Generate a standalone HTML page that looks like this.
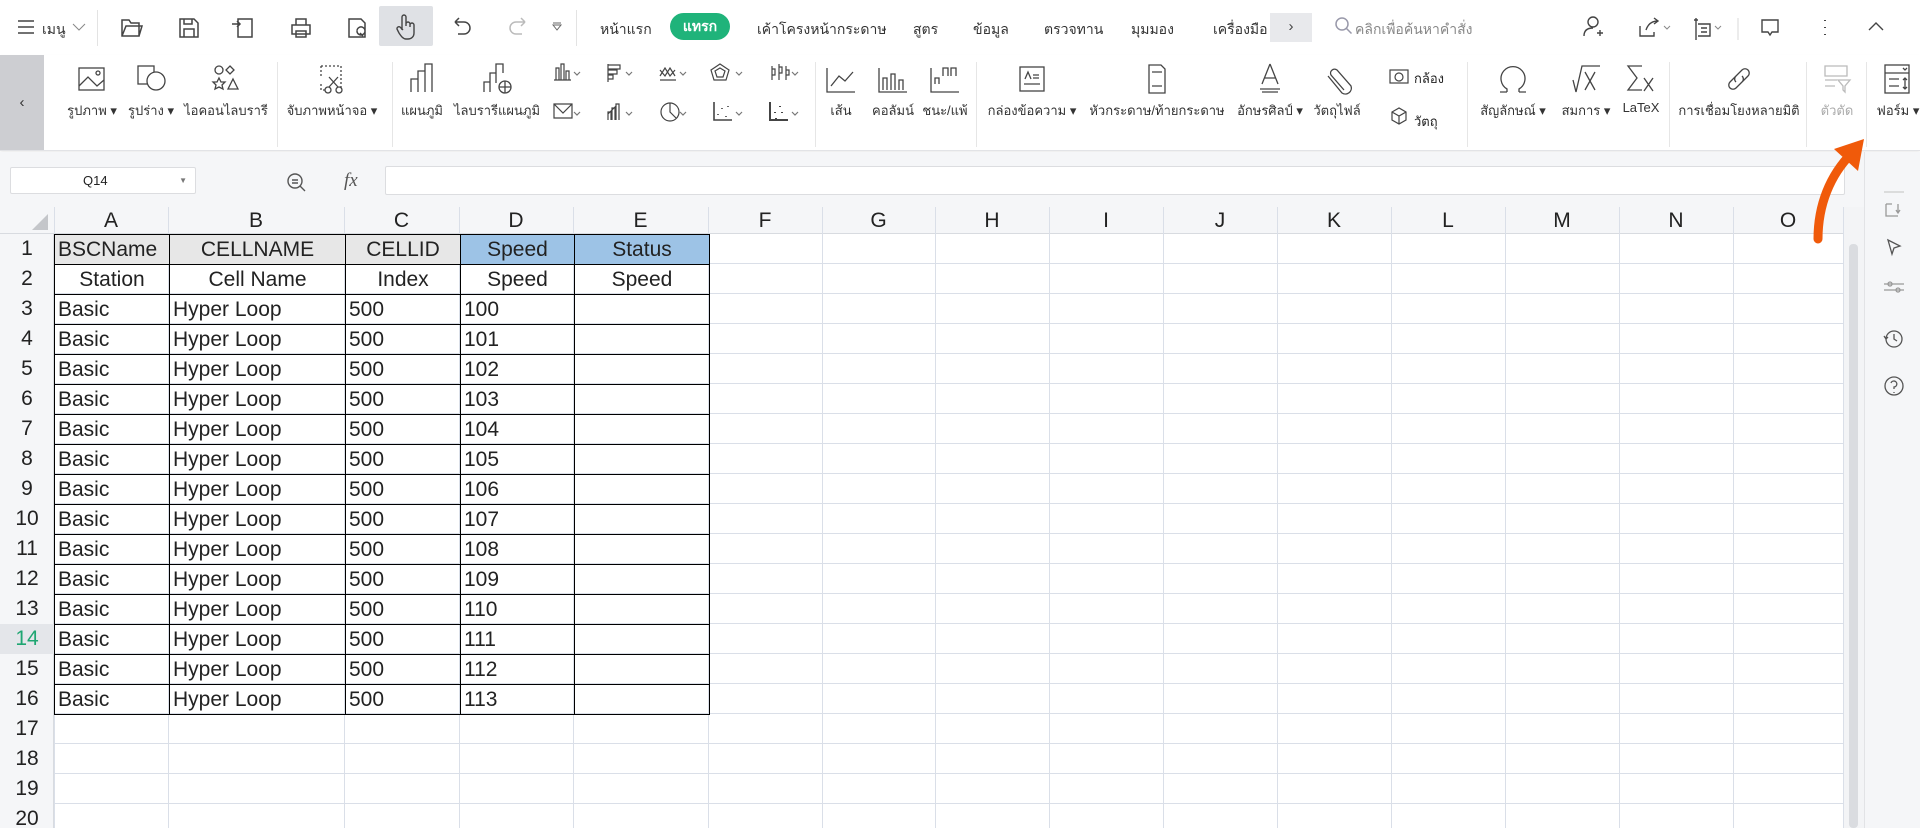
<!DOCTYPE html>
<html><head><meta charset="utf-8"><style>
*{box-sizing:border-box;margin:0;padding:0}
body{width:1920px;height:828px;overflow:hidden;background:#fff;font-family:"Liberation Sans","DejaVu Sans",sans-serif;position:relative;color:#222}
.a{position:absolute}
.tb{font-size:14px;color:#333;top:19px}
.ic{position:absolute}
.ri{position:absolute;top:62px;width:34px;height:36px;fill:none;stroke:#444;stroke-width:1.3}
.rl{position:absolute;top:100px;font-size:13px;color:#333;white-space:nowrap;transform:translateX(-50%)}
.sep{position:absolute;top:62px;width:1px;height:85px;background:#e6e6e6}
.grid{position:absolute;left:54px;top:234px;width:1789px;height:594px;background:repeating-linear-gradient(to bottom,transparent 0,transparent 29px,#dadfe8 29px,#dadfe8 30px)}
.vl{position:absolute;top:207px;width:1px;height:621px;background:#dadfe8}
.ch{position:absolute;top:207px;height:27px;font-size:21px;text-align:center;line-height:27px;color:#222}
.rh{position:absolute;left:0;width:54px;height:30px;font-size:21px;line-height:30px;text-align:center}
table{position:absolute;left:54px;top:234px;border-collapse:collapse;font-size:21px}
td{border:1px solid #000;height:30px;padding:0 3px;line-height:28px;white-space:nowrap}
tr.c td{text-align:center}
</style></head><body>
<!-- top bar -->
<svg class="ic" style="left:16px;top:18px" width="22" height="18"><path d="M2 3h16M2 9h16M2 15h16" stroke="#444" stroke-width="1.5"/></svg>
<div class="a tb" style="left:42px">เมนู</div>
<svg class="ic" style="left:72px;top:22px" width="14" height="10"><path d="M1 2l6 6 6-6" stroke="#888" fill="none"/></svg>
<div class="a" style="left:97px;top:10px;width:1px;height:36px;background:#e3e3e3"></div>
<svg class="ic" style="left:120px;top:16px" width="360" height="24" fill="none" stroke="#444" stroke-width="1.5">
<path d="M2 4h7l2 3h8v13H2z M2 20l4-10h16l-3 10"/>
<path d="M60 3h14l4 4v14H60z M64 21v-8h10v8 M64 3v5h8V3"/>
<path d="M118 3h14v18h-14z M112 8h8 M117 5l3 3-3 3"/>
<path d="M172 9h18v9h-18z M176 9V3h10v6 M176 15h10v6h-10z"/>
<path d="M229 3h12l4 4v14h-16z M237 15a4 4 0 1 0 0-.1 M240 17l3 3"/>
</svg>
<div class="a" style="left:379px;top:6px;width:54px;height:40px;background:#dfe1e5;border-radius:2px"></div>
<svg class="ic" style="left:392px;top:12px" width="30" height="30" fill="none" stroke="#444" stroke-width="1.4"><path d="M10 18V5a2 2 0 0 1 4 0v9 M14 12a2 2 0 0 1 4 0v3 M18 13a2 2 0 0 1 4 0v8c0 4-3 6-6 6h-2c-3 0-5-3-7-6l-2-4a2 2 0 0 1 3-2l3 3"/></svg>
<svg class="ic" style="left:450px;top:16px" width="120" height="24" fill="none" stroke-width="1.5"><path d="M5 6h9a6 6 0 0 1 0 12h-6 M5 6l4-4 M5 6l4 4" stroke="#444"/><path d="M75 6h-9a6 6 0 0 0 0 12h6 M75 6l-4-4 M75 6l-4 4" stroke="#bbb"/><path d="M103 9l4 5 4-5z M103 7h8" stroke="#666" stroke-width="1"/></svg>
<div class="a" style="left:576px;top:10px;width:1px;height:36px;background:#e3e3e3"></div>
<div class="a tb" style="left:600px">หน้าแรก</div>
<div class="a" style="left:670px;top:13px;width:60px;height:27px;background:#1fb37a;border-radius:14px;color:#fff;font-size:14px;font-weight:bold;text-align:center;line-height:27px">แทรก</div>
<div class="a tb" style="left:757px">เค้าโครงหน้ากระดาษ</div>
<div class="a tb" style="left:913px">สูตร</div>
<div class="a tb" style="left:973px">ข้อมูล</div>
<div class="a tb" style="left:1044px">ตรวจทาน</div>
<div class="a tb" style="left:1131px">มุมมอง</div>
<div class="a tb" style="left:1213px">เครื่องมือ</div>
<div class="a" style="left:1270px;top:13px;width:42px;height:29px;background:#e8e9ec;text-align:center;line-height:28px;font-size:15px;color:#444">›</div>
<svg class="ic" style="left:1334px;top:16px" width="20" height="20" fill="none" stroke="#99a" stroke-width="1.5"><circle cx="8" cy="8" r="6"/><path d="M12.5 12.5l5 5"/></svg>
<div class="a tb" style="left:1355px;color:#888">คลิกเพื่อค้นหาคำสั่ง</div>
<svg class="ic" style="left:1580px;top:14px" width="320" height="26" fill="none" stroke="#444" stroke-width="1.4">
<circle cx="13" cy="8" r="5"/><path d="M4 22c0-6 4-8 9-8 M17 19h6 M20 16v6"/>
<path d="M60 12v10h14v-4 M66 16c2-6 6-9 12-9 M74 4l4 3-4 3"/><path d="M84 12l3 3 3-3" stroke="#888" stroke-width="1"/>
<path d="M114 6h4 M116 4v22 M118 10h12v12h-12 M121 14h6 M121 18h6"/><path d="M135 12l3 3 3-3" stroke="#888" stroke-width="1"/>
<path d="M158 4v28" stroke="#e3e3e3"/>
<path d="M182 6h16v12h-6l-2 3-2-3h-6z"/>
<path d="M245 6v1 M245 13v1 M245 20v1" stroke-width="2"/>
<path d="M289 16l7-7 7 7"/>
</svg>
<!-- ribbon -->
<div class="a" style="left:0;top:55px;width:1920px;height:96px;border-bottom:1px solid #e2e3e6;box-shadow:0 2px 3px #eee"></div>
<div class="a" style="left:0;top:55px;width:44px;height:95px;background:#cdced2;text-align:center;line-height:95px;font-size:15px;color:#333">‹</div>
<svg class="ri" style="left:75px"><rect x="4" y="6" width="25" height="22"/><path d="M4 24l9-9 9 9 7-6"/><circle cx="23" cy="11" r="2"/></svg>
<svg class="ri" style="left:134px"><rect x="4" y="4" width="16" height="18"/><circle cx="22" cy="19" r="9" fill="#fff"/></svg>
<svg class="ri" style="left:209px"><circle cx="10" cy="8" r="4"/><path d="M21 4l4 4-4 4-4-4z M10 16l2 4h4l-3 3 1 4-4-2-4 2 1-4-3-3h4z M24 17l5 10h-10z"/></svg>
<svg class="ri" style="left:315px"><path d="M6 4h20v24 M6 4v10 M6 22v6h6" stroke-dasharray="2 2"/><circle cx="13" cy="28" r="3"/><circle cx="24" cy="28" r="3"/><path d="M14 25l9-10 M23 25l-9-10"/></svg>
<svg class="ri" style="left:405px"><path d="M6 30V17h7v13 M13 30V9h7v21 M20 30V2h7v28"/></svg>
<svg class="ri" style="left:480px"><path d="M4 30V20h6v10 M10 30V11h6v10 M16 15V2h7v9"/><circle cx="25" cy="25" r="6"/><path d="M19 25h12 M25 19v12"/></svg>
<svg class="ic" style="left:550px;top:62px" width="260" height="70" fill="none" stroke="#444" stroke-width="1.2">
<path d="M6 18V6h3v12 M11 18V2h3v16 M16 18V9h3v9 M4 18h17"/><path d="M24 10l3 3 3-3" stroke="#777"/>
<path d="M58 3h12v4H58 M58 8h9v4h-9 M58 13h5v4h-5 M58 2v18"/><path d="M76 10l3 3 3-3" stroke="#777"/>
<path d="M110 8l5 6 5-8 5 8 M110 14l5-8 5 8 5-6 M110 18h16"/><path d="M130 10l3 3 3-3" stroke="#777"/>
<path d="M170 2l9 6-3 10h-12l-3-10z M170 6l5 3-2 6h-6l-2-6z"/><path d="M186 10l3 3 3-3" stroke="#777"/>
<path d="M222 4v14 M222 7h3v6h-3 M229 2v16 M229 5h3v6h-3 M236 4v14 M236 8h3v5h-3"/><path d="M242 10l3 3 3-3" stroke="#777"/>
<path d="M4 42h18v14H4z M4 42l9 9 9-9"/><path d="M24 50l3 3 3-3" stroke="#777"/>
<path d="M58 58V50h3v8 M62 58V46h3v12 M66 58V42h3v16 M58 52l8-8"/><path d="M76 50l3 3 3-3" stroke="#777"/>
<circle cx="120" cy="50" r="9"/><path d="M120 41v9l6 6"/><path d="M130 50l3 3 3-3" stroke="#777"/>
<path d="M164 40v18h18 M168 52v1 M172 46v1 M176 54v1 M178 44v1" stroke-width="1.6"/><path d="M186 50l3 3 3-3" stroke="#777"/>
<path d="M220 40v18h18 M225 50v1 M230 44v1 M232 50v1 M226 56v1" stroke-width="2"/><path d="M242 50l3 3 3-3" stroke="#777"/>
</svg>
<svg class="ri" style="left:824px"><path d="M3 6v24h28 M7 24l8-10 6 5 8-9"/></svg>
<svg class="ri" style="left:876px"><path d="M3 6v24h28 M7 28v-12h4v12 M15 28v-16h4v16 M23 28v-10h4v10"/></svg>
<svg class="ri" style="left:928px"><path d="M3 6v24h28 M7 22v-6h4v6 M15 14v-8h5v8 M23 14v-8h5v8"/></svg>
<svg class="ri" style="left:1015px"><rect x="5" y="5" width="24" height="24"/><path d="M9 22h16 M10 17l3-7 3 7 M18 13h6 M18 16h6"/></svg>
<svg class="ri" style="left:1140px"><path d="M9 3h12l4 4v24h-16z M12 10h10 M12 24h10"/></svg>
<svg class="ri" style="left:1253px"><path d="M17 2l-8 20 M17 2l8 20 M11 16h12 M7 27h20 M9 30h16"/></svg>
<svg class="ri" style="left:1320px"><path d="M24 28l-13-15a4 4 0 0 1 6-5l14 16a6 6 0 0 1-9 7l-14-17"/></svg>
<svg class="ic" style="left:1388px;top:66px" width="40" height="60" fill="none" stroke="#444" stroke-width="1.2"><rect x="2" y="4" width="18" height="13"/><circle cx="11" cy="11" r="4"/><path d="M4 46l7-4 7 4v8l-7 4-7-4z M11 50v8 M4 46l7 4 7-4"/></svg>
<div class="a" style="left:1414px;top:68px;font-size:13px">กล้อง</div>
<div class="a" style="left:1414px;top:111px;font-size:13px">วัตถุ</div>
<svg class="ri" style="left:1496px"><path d="M11 30h-7 M23 30h7 M11 30v-3a12 12 0 1 1 12 0v3"/></svg>
<svg class="ri" style="left:1569px"><path d="M4 18l3 12 6-26h18 M16 10l10 18 M26 10l-10 18"/></svg>
<svg class="ri" style="left:1624px"><path d="M18 4H4l9 12-9 12h14 M20 16l9 13 M29 16l-9 13"/></svg>
<svg class="ri" style="left:1722px"><path d="M14 14l-6 6a4 4 0 0 0 6 6l6-6a4 4 0 0 0 0-6 M20 20l6-6a4 4 0 0 0-6-6l-6 6a4 4 0 0 0 0 6"/></svg>
<svg class="ri" style="left:1820px;stroke:#bbb"><path d="M5 4h22v10H5z M5 18h12 M5 24h10 M18 18h12l-5 6v6l-2-2v-4z"/></svg>
<svg class="ri" style="left:1881px"><rect x="4" y="3" width="24" height="28"/><path d="M4 11h24 M8 17h10 M8 24h10 M24 16v11 M22 18l2-2 2 2 M22 25l2 2 2-2 M22 6l2 2 2-2"/></svg>
<div class="rl" style="left:92px">รูปภาพ ▾</div>
<div class="rl" style="left:151px">รูปร่าง ▾</div>
<div class="rl" style="left:226px">ไอคอนไลบรารี</div>
<div class="sep" style="left:277px"></div>
<div class="rl" style="left:332px">จับภาพหน้าจอ ▾</div>
<div class="sep" style="left:392px"></div>
<div class="rl" style="left:422px">แผนภูมิ</div>
<div class="rl" style="left:497px">ไลบรารีแผนภูมิ</div>
<div class="sep" style="left:815px"></div>
<div class="rl" style="left:841px">เส้น</div>
<div class="rl" style="left:893px">คอลัมน์</div>
<div class="rl" style="left:945px">ชนะ/แพ้</div>
<div class="sep" style="left:976px"></div>
<div class="rl" style="left:1032px">กล่องข้อความ ▾</div>
<div class="rl" style="left:1157px">หัวกระดาษ/ท้ายกระดาษ</div>
<div class="rl" style="left:1270px">อักษรศิลป์ ▾</div>
<div class="rl" style="left:1337px">วัตถุไฟล์</div>
<div class="sep" style="left:1467px"></div>
<div class="rl" style="left:1513px">สัญลักษณ์ ▾</div>
<div class="rl" style="left:1586px">สมการ ▾</div>
<div class="rl" style="left:1641px">LaTeX</div>
<div class="sep" style="left:1669px"></div>
<div class="rl" style="left:1739px">การเชื่อมโยงหลายมิติ</div>
<div class="sep" style="left:1806px"></div>
<div class="rl" style="left:1837px;color:#aaa">ตัวตัด</div>
<div class="sep" style="left:1866px"></div>
<div class="rl" style="left:1898px">ฟอร์ม ▾</div>
<!-- formula bar area -->
<div class="a" style="left:0;top:152px;width:1864px;height:55px;background:#f5f6f8"></div>
<div class="a" style="left:10px;top:167px;width:186px;height:27px;background:#fff;border:1px solid #dcdde0;border-radius:2px;font-size:13px;line-height:25px;padding-left:72px">Q14<span style="position:absolute;right:8px;font-size:8px;color:#777">▼</span></div>
<svg class="ic" style="left:286px;top:172px" width="22" height="22" fill="none" stroke="#555" stroke-width="1.4"><circle cx="9" cy="9" r="7"/><path d="M14 14l5 5 M6 8h6 M6 11h6"/></svg>
<div class="a" style="left:344px;top:170px;font-size:19px;font-style:italic;font-family:'Liberation Serif',serif;color:#555">fx</div>
<div class="a" style="left:385px;top:166px;width:1460px;height:29px;background:#fff;border:1px solid #dcdde0;border-radius:2px"></div>
<!-- right panel -->
<div class="a" style="left:1864px;top:152px;width:56px;height:676px;background:#f5f6f8;border-left:1px solid #e2e3e6"></div>
<div class="a" style="left:1843px;top:207px;width:21px;height:621px;background:#f3f4f6"></div>
<div class="a" style="left:1849px;top:244px;width:9px;height:584px;background:#dadce0;border-radius:4px"></div>
<svg class="ic" style="left:1876px;top:190px" width="36" height="210" fill="none" stroke="#555" stroke-width="1.3">
<path d="M8 2h20" stroke="#ccc"/><path d="M10 14v12h12 M22 14v8 M20 20l2 3 2-3 M10 14h6" stroke="#999"/>
<path d="M12 50l12 6-6 2-2 6z"/>
<path d="M8 94h20 M8 100h20" stroke="#999"/><circle cx="14" cy="94" r="2" stroke="#999"/><circle cx="22" cy="100" r="2" stroke="#999"/>
<circle cx="18" cy="149" r="8"/><path d="M18 144v5l3 2 M8 146l2 3 2-2"/>
<circle cx="18" cy="196" r="9"/><path d="M15 193a3 3 0 1 1 3 4v2 M18 202v1"/>
</svg>
<!-- sheet -->
<div class="a" style="left:0;top:207px;width:1843px;height:27px;background:#f5f6f8;border-bottom:1px solid #d8dbe0"></div>
<div class="a" style="left:0;top:234px;width:54px;height:594px;background:#f5f6f8;border-right:1px solid #d8dbe0"></div>
<svg class="ic" style="left:22px;top:212px" width="28" height="20"><path d="M26 2v16H10z" fill="#c4c6ca"/></svg>
<div class="grid"></div>
<div class="vl" style="left:54px"></div><div class="vl" style="left:168px"></div><div class="vl" style="left:344px"></div><div class="vl" style="left:459px"></div><div class="vl" style="left:573px"></div><div class="vl" style="left:708px"></div><div class="vl" style="left:822px"></div><div class="vl" style="left:935px"></div><div class="vl" style="left:1049px"></div><div class="vl" style="left:1163px"></div><div class="vl" style="left:1277px"></div><div class="vl" style="left:1391px"></div><div class="vl" style="left:1505px"></div><div class="vl" style="left:1619px"></div><div class="vl" style="left:1733px"></div><div class="vl" style="left:1843px"></div>
<div class="ch" style="left:54px;width:114px">A</div><div class="ch" style="left:168px;width:176px">B</div><div class="ch" style="left:344px;width:115px">C</div><div class="ch" style="left:459px;width:114px">D</div><div class="ch" style="left:573px;width:135px">E</div><div class="ch" style="left:708px;width:114px">F</div><div class="ch" style="left:822px;width:113px">G</div><div class="ch" style="left:935px;width:114px">H</div><div class="ch" style="left:1049px;width:114px">I</div><div class="ch" style="left:1163px;width:114px">J</div><div class="ch" style="left:1277px;width:114px">K</div><div class="ch" style="left:1391px;width:114px">L</div><div class="ch" style="left:1505px;width:114px">M</div><div class="ch" style="left:1619px;width:114px">N</div><div class="ch" style="left:1733px;width:110px">O</div>
<div class="rh" style="top:234px">1</div><div class="rh" style="top:264px">2</div><div class="rh" style="top:294px">3</div><div class="rh" style="top:324px">4</div><div class="rh" style="top:354px">5</div><div class="rh" style="top:384px">6</div><div class="rh" style="top:414px">7</div><div class="rh" style="top:444px">8</div><div class="rh" style="top:474px">9</div><div class="rh" style="top:504px">10</div><div class="rh" style="top:534px">11</div><div class="rh" style="top:564px">12</div><div class="rh" style="top:594px">13</div><div class="rh" style="top:624px;color:#1fa672;background:#e4e6ea">14</div><div class="rh" style="top:654px">15</div><div class="rh" style="top:684px">16</div><div class="rh" style="top:714px">17</div><div class="rh" style="top:744px">18</div><div class="rh" style="top:774px">19</div><div class="rh" style="top:804px">20</div>
<table>
<colgroup><col style="width:115px"><col style="width:176px"><col style="width:115px"><col style="width:114px"><col style="width:135px"></colgroup>
<tr class="c"><td style="background:#e7e7e7;text-align:left">BSCName</td><td style="background:#e7e7e7">CELLNAME</td><td style="background:#e7e7e7">CELLID</td><td style="background:#9dc3e6">Speed</td><td style="background:#9dc3e6">Status</td></tr>
<tr class="c"><td>Station</td><td>Cell Name</td><td>Index</td><td>Speed</td><td>Speed</td></tr>
<tr><td>Basic</td><td>Hyper Loop</td><td>500</td><td>100</td><td></td></tr>
<tr><td>Basic</td><td>Hyper Loop</td><td>500</td><td>101</td><td></td></tr>
<tr><td>Basic</td><td>Hyper Loop</td><td>500</td><td>102</td><td></td></tr>
<tr><td>Basic</td><td>Hyper Loop</td><td>500</td><td>103</td><td></td></tr>
<tr><td>Basic</td><td>Hyper Loop</td><td>500</td><td>104</td><td></td></tr>
<tr><td>Basic</td><td>Hyper Loop</td><td>500</td><td>105</td><td></td></tr>
<tr><td>Basic</td><td>Hyper Loop</td><td>500</td><td>106</td><td></td></tr>
<tr><td>Basic</td><td>Hyper Loop</td><td>500</td><td>107</td><td></td></tr>
<tr><td>Basic</td><td>Hyper Loop</td><td>500</td><td>108</td><td></td></tr>
<tr><td>Basic</td><td>Hyper Loop</td><td>500</td><td>109</td><td></td></tr>
<tr><td>Basic</td><td>Hyper Loop</td><td>500</td><td>110</td><td></td></tr>
<tr><td>Basic</td><td>Hyper Loop</td><td>500</td><td>111</td><td></td></tr>
<tr><td>Basic</td><td>Hyper Loop</td><td>500</td><td>112</td><td></td></tr>
<tr><td>Basic</td><td>Hyper Loop</td><td>500</td><td>113</td><td></td></tr>
</table>
<!-- orange arrow -->
<svg class="ic" style="left:1800px;top:135px" width="80" height="110"><path d="M18 104C18 70 30 40 52 18" stroke="#f05a0a" stroke-width="9" fill="none" stroke-linecap="round"/><path d="M34 14L64 4 58 36z" fill="#f05a0a"/></svg>
</body></html>
